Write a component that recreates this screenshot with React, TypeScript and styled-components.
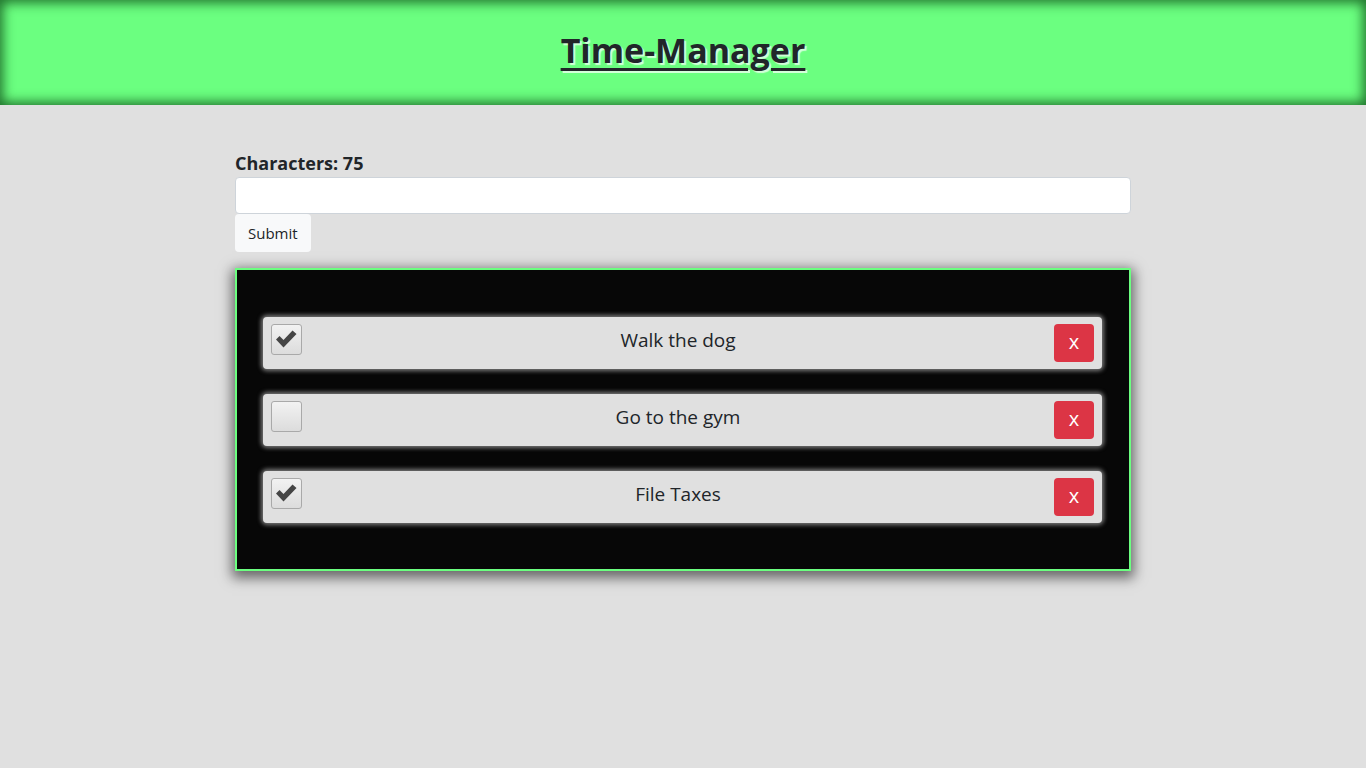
import React, { useState } from 'react';
import styled, { createGlobalStyle } from 'styled-components';

const GlobalStyle = createGlobalStyle`
  * {
    box-sizing: border-box;
  }

  body {
    margin: 0;
    background: #e0e0e0;
    font-family: 'Segoe UI', 'Open Sans', 'Noto Sans', sans-serif;
    color: #212529;
  }
`;

const Header = styled.header`
  height: 105px;
  display: flex;
  align-items: center;
  justify-content: center;
  background: #6bff80;
  box-shadow: inset 0 0 12px 3px rgba(20, 90, 30, 0.85);

  h1 {
    margin: 0;
    padding-bottom: 6px;
    font-size: 34px;
    font-weight: 700;
    color: #212529;
    text-decoration: underline;
    text-decoration-thickness: 3px;
    text-underline-offset: 5px;
    text-shadow: 2px 2px 1px rgba(255, 255, 255, 0.7);
  }
`;

const Main = styled.main`
  width: 896px;
  margin: 0 auto;
  padding: 46px 0 60px;
`;

const Form = styled.form`
  display: flex;
  flex-direction: column;
  align-items: flex-start;

  label {
    font-size: 18px;
    font-weight: 700;
    line-height: 24px;
    margin-bottom: 2px;
  }
`;

const TextInput = styled.input`
  width: 100%;
  height: 37px;
  padding: 6px 12px;
  border: 1px solid #ced4da;
  border-radius: 4px;
  background: #fff;
  font-size: 16px;
  font-family: inherit;
`;

const SubmitButton = styled.button`
  height: 38px;
  padding: 0 13px;
  border: none;
  border-radius: 4px;
  background: #f8f9fa;
  color: #212529;
  font-family: inherit;
  font-size: 15px;
`;

const TaskPanel = styled.section`
  margin-top: 16px;
  padding: 47px 27px 46px 26px;
  display: flex;
  flex-direction: column;
  gap: 25px;
  background: #070707;
  border: 2px solid #6bff80;
  box-shadow: 0 4px 12px 3px rgba(0, 0, 0, 0.55);
`;

const TaskRow = styled.div`
  height: 52px;
  display: flex;
  align-items: flex-start;
  padding: 7px 8px 0;
  background: #e0e0e0;
  border-radius: 4px;
  box-shadow: 0 0 4px 2px rgba(200, 200, 200, 0.6);
`;

const CheckBox = styled.button<{ $checked: boolean }>`
  width: 31px;
  height: 31px;
  flex: none;
  padding: 0;
  display: flex;
  align-items: center;
  justify-content: center;
  border: 1px solid #a9a9a9;
  border-radius: 3px;
  background: linear-gradient(#f2f2f2, #dcdcdc);
  cursor: pointer;

  svg {
    margin-top: -2px;
    visibility: ${p => (p.$checked ? 'visible' : 'hidden')};
  }
`;

const TaskText = styled.span`
  flex: 1;
  text-align: center;
  font-size: 19px;
  line-height: 32px;
  color: #212529;
`;

const DeleteButton = styled.button`
  width: 40px;
  height: 38px;
  flex: none;
  border: none;
  border-radius: 4px;
  background: #dc3545;
  color: #fff;
  font-family: inherit;
  font-size: 20px;
  line-height: 1;
  padding: 0 0 3px;
`;

const CheckMark = () => (
  <svg width="24" height="20" viewBox="0 0 24 20">
    <path
      d="M1 10.5 L4.5 7 L8.5 11 L17.5 1.5 L21.5 5 L8.5 18.5 Z"
      fill="#454545"
    />
  </svg>
);

const initialTasks = [
  { id: 1, text: 'Walk the dog', done: true },
  { id: 2, text: 'Go to the gym', done: false },
  { id: 3, text: 'File Taxes', done: true },
];

export default function App() {
  const [tasks, setTasks] = useState(initialTasks);
  const [value, setValue] = useState('');

  const toggle = (id: number) =>
    setTasks(tasks.map(t => (t.id === id ? { ...t, done: !t.done } : t)));

  return (
    <>
      <GlobalStyle />
      <Header>
        <h1>Time-Manager</h1>
      </Header>
      <Main>
        <Form onSubmit={e => e.preventDefault()}>
          <label htmlFor="task">Characters: {75 - value.length}</label>
          <TextInput
            id="task"
            value={value}
            onChange={e => setValue(e.target.value)}
          />
          <SubmitButton type="submit">Submit</SubmitButton>
        </Form>
        <TaskPanel>
          {tasks.map(task => (
            <TaskRow key={task.id}>
              <CheckBox $checked={task.done} onClick={() => toggle(task.id)}>
                <CheckMark />
              </CheckBox>
              <TaskText>{task.text}</TaskText>
              <DeleteButton>x</DeleteButton>
            </TaskRow>
          ))}
        </TaskPanel>
      </Main>
    </>
  );
}
